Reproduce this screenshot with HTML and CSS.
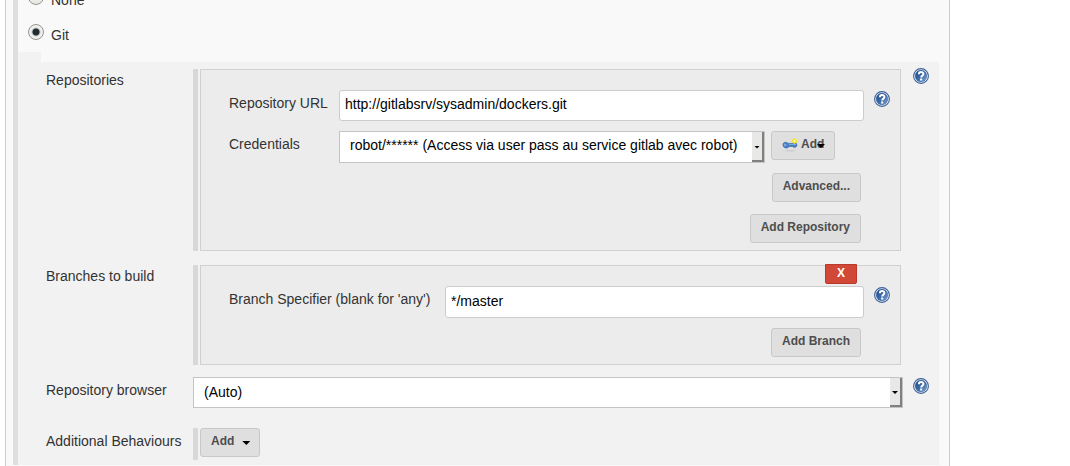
FILE: index.html
```html
<!DOCTYPE html>
<html lang="en">
<head>
<meta charset="utf-8">
<title>Source Code Management</title>
<link rel="stylesheet" href="styles.css">
</head>
<body>
<svg class="defs" width="0" height="0" aria-hidden="true">
  <defs>
    <linearGradient id="help-fill" x1="0" y1="0" x2="1" y2="1">
      <stop offset="0" stop-color="#204a87"/>
      <stop offset="0.5" stop-color="#3b69a5"/>
      <stop offset="1" stop-color="#82a9d6"/>
    </linearGradient>
    <symbol id="help" viewBox="0 0 16 16">
      <circle cx="8" cy="8" r="7.4" fill="#fff" stroke="#3a5f97" stroke-width="1.1"/>
      <circle cx="8" cy="8" r="5.9" fill="url(#help-fill)" stroke="#2c5590" stroke-width="0.4"/>
      <path d="M5.9 6.2C5.9 3.4 10.4 3.4 10.4 6.1C10.4 7.7 8.2 7.6 8.2 9.5" fill="none" stroke="#fff" stroke-width="2"/>
      <rect x="7.1" y="10.5" width="2.1" height="2" fill="#fff"/>
    </symbol>
  </defs>
</svg>
<main class="panel">
  <form class="scm">
    <label class="choice"><input type="radio" name="scm" value="none"><span>None</span></label>
    <label class="choice"><input type="radio" name="scm" value="git" checked><span>Git</span></label>

    <section class="settings">
      <div class="step"></div>
      <div class="rows">
        <div class="row">
          <span class="name">Repositories</span>
          <div class="handle">
            <div class="box">
              <div class="field">
                <label class="short" for="url">Repository URL</label>
                <input class="text" id="url" type="text" value="http://gitlabsrv/sysadmin/dockers.git">
                <button type="button" class="help" aria-label="Help: Repository URL"><svg><use href="#help"/></svg></button>
              </div>
              <div class="field">
                <label class="short" for="cred">Credentials</label>
                <span class="pick pick-cred">
                  <select id="cred"><option>robot/****** (Access via user pass au service gitlab avec robot)</option></select>
                  <span class="drop"><i class="caret"></i></span>
                </span>
                <button type="button" class="btn btn-key">
                  <svg class="key" viewBox="0 0 16 16" aria-hidden="true">
                    <ellipse cx="8" cy="14.8" rx="5.5" ry="0.7" fill="#ccc"/>
                    <path d="M1 8.7C1 6.2 4 5.5 6.2 7.4H14.5L15 10.2H13.5V11.2H11.5V10.4H7.2C5.5 13 1 12.4 1 8.7Z" fill="#4b83c6" stroke="#3465a4" stroke-width="0.7"/>
                    <path d="M7 8.4H14" stroke="#83afe0"/>
                    <circle cx="3.1" cy="8.9" r="0.9" fill="#a7c4e5"/>
                    <path d="M12.3 2L13.4 3.2L15 3.4L14.8 5L15.6 6.2L14 6.8L12.5 7.9L11.2 6.8L9.5 6.2L10.2 5L9.8 3.4L11.4 3.2Z" fill="#f4e52d"/>
                    <circle cx="12.5" cy="5" r="1" fill="#fffbb0"/>
                  </svg>
                  Add<i class="caret caret-over"></i>
                </button>
              </div>
              <div class="actions"><button type="button" class="btn">Advanced...</button></div>
              <div class="actions"><button type="button" class="btn">Add Repository</button></div>
            </div>
          </div>
          <button type="button" class="help" aria-label="Help: Repositories"><svg><use href="#help"/></svg></button>
        </div>

        <div class="row">
          <span class="name">Branches to build</span>
          <div class="handle">
            <div class="box">
              <button type="button" class="remove">X</button>
              <div class="field">
                <label class="long" for="branch">Branch Specifier (blank for 'any')</label>
                <input class="text text-tall" id="branch" type="text" value="*/master">
                <button type="button" class="help" aria-label="Help: Branch Specifier"><svg><use href="#help"/></svg></button>
              </div>
              <div class="actions"><button type="button" class="btn">Add Branch</button></div>
            </div>
          </div>
        </div>

        <div class="row row-browser">
          <label class="name" for="browser">Repository browser</label>
          <span class="pick">
            <select id="browser"><option>(Auto)</option></select>
            <span class="drop"><i class="caret"></i></span>
          </span>
          <button type="button" class="help" aria-label="Help: Repository browser"><svg><use href="#help"/></svg></button>
        </div>

        <div class="row row-extra">
          <span class="name">Additional Behaviours</span>
          <div class="handle handle-btn">
            <button type="button" class="btn btn-menu">Add<i class="caret"></i></button>
          </div>
        </div>
      </div>
    </section>
  </form>
</main>
</body>
</html>
```
FILE: styles.css
```css
* { box-sizing: border-box; }

html { overflow: hidden; }

body {
  margin: 0;
  background: #fff;
  color: #333;
  font: 14px/18px "Liberation Sans", Arial, sans-serif;
}

.defs { display: block; }

/* The page is scrolled a little way into the SCM choices. */
.panel {
  margin: -18px 120px 0 5px;
  padding: 0 10px 1px 7px;
  background: #f9f9f9;
  border: 1px solid #ccc;
  border-width: 0 1px;
}

.scm { border-left: 5px solid #dedede; }

.choice {
  display: flex;
  align-items: center;
  gap: 7px;
  height: 35px;
  padding-left: 10px;
}

.choice input {
  appearance: none;
  width: 16px;
  height: 16px;
  margin: 0 0 5px;
  border: 1px solid #96968f;
  border-radius: 50%;
  background: linear-gradient(#fff, #e4e4e0);
}

.choice input:checked {
  background: radial-gradient(circle, #232b33 3px, #c8c8c8 4px, #f0f0ee 5px);
}

.settings { background: #f2f2f2; }

.step {
  height: 10px;
  margin-left: 23px;
  background: #f9f9f9;
}

.rows {
  display: flex;
  flex-direction: column;
  gap: 14px;
  padding: 7px 10px 5px 28px;
}

.row {
  display: grid;
  grid-template-columns: 147px 1fr 16px;
  align-items: start;
}

.name { padding-top: 2px; }

.row-browser { margin-top: -2px; }
.row-browser .name { padding-top: 4px; }
.row-extra { margin-top: 6px; }
.row-extra .name { padding-top: 4px; }

.handle {
  margin-right: 12px;
  padding-left: 2px;
  border-left: 5px solid #d8d8d8;
}

.handle-btn { padding-bottom: 3px; }

.box {
  position: relative;
  display: flex;
  flex-direction: column;
  gap: 10px;
  padding: 20px 10px 7px 28px;
  background: #ececec;
  border: 1px solid #d0d0d0;
}

.field {
  display: flex;
  align-items: flex-start;
}

.field label { padding-top: 4px; }
.short { flex: 0 0 110px; }
.long { flex: 0 0 216px; }

.text {
  flex: 1;
  min-width: 0;
  height: 31px;
  margin-right: 10px;
  padding: 0 5px 3px;
  border: 1px solid #ccc;
  border-radius: 3px;
  background: #fff;
  color: #000;
  font: inherit;
}

.text-tall { height: 32px; }

.help {
  width: 16px;
  height: 16px;
  margin-top: 1px;
  padding: 0;
  border: 0;
  background: none;
}

.row > .help { margin-top: -1px; }
.row-browser > .help { margin-top: 1px; }

.help svg {
  display: block;
  width: 16px;
  height: 16px;
}

.pick {
  position: relative;
  display: flex;
  margin-right: 10px;
}

.pick-cred {
  flex: 0 1 426px;
  margin-right: 6px;
}

.pick select {
  appearance: none;
  width: 100%;
  height: 31px;
  padding: 0 20px 2px 10px;
  border: 1px solid #c4c4c4;
  border-radius: 0;
  background: #fff;
  color: #000;
  font: inherit;
}

.pick-cred select {
  height: 32px;
  padding-bottom: 4px;
}

.drop {
  position: absolute;
  top: 1px;
  right: 1px;
  bottom: 1px;
  display: flex;
  align-items: center;
  justify-content: center;
  width: 12px;
  background: #e8e8e6;
  border: solid #808080;
  border-width: 0 2px 2px 0;
  pointer-events: none;
}

.caret {
  width: 6px;
  height: 3px;
  margin-top: 2px;
  background: #000;
  clip-path: polygon(0 0, 100% 0, 50% 100%);
}

.btn {
  display: inline-flex;
  align-items: center;
  height: 29px;
  padding: 0 10px 3px;
  border: 1px solid #c8c8c8;
  border-radius: 3px;
  background: #dfdfdf;
  color: #4d4d4d;
  font: bold 12px/16px "Liberation Sans", Arial, sans-serif;
}

.btn-key {
  position: relative;
  width: 64px;
}

.key {
  flex: none;
  width: 16px;
  height: 16px;
  margin-right: 3px;
}

.btn-menu .caret {
  width: 8px;
  height: 4px;
  margin: 4px -1px 0 8px;
}

.caret-over {
  position: absolute;
  right: 9px;
  top: 10px;
  width: 8px;
  height: 4px;
}

.actions {
  display: flex;
  justify-content: flex-end;
  padding: 0 29px 2px 0;
}

.actions:last-child { padding-bottom: 0; }

.remove {
  position: absolute;
  top: -2px;
  right: 43px;
  width: 32px;
  height: 20px;
  padding: 0 0 3px;
  border: 1px solid #b93a2c;
  border-radius: 0 0 2px 2px;
  background: #d14836;
  color: #fff;
  font: bold 12px/16px "Liberation Sans", Arial, sans-serif;
}
```
